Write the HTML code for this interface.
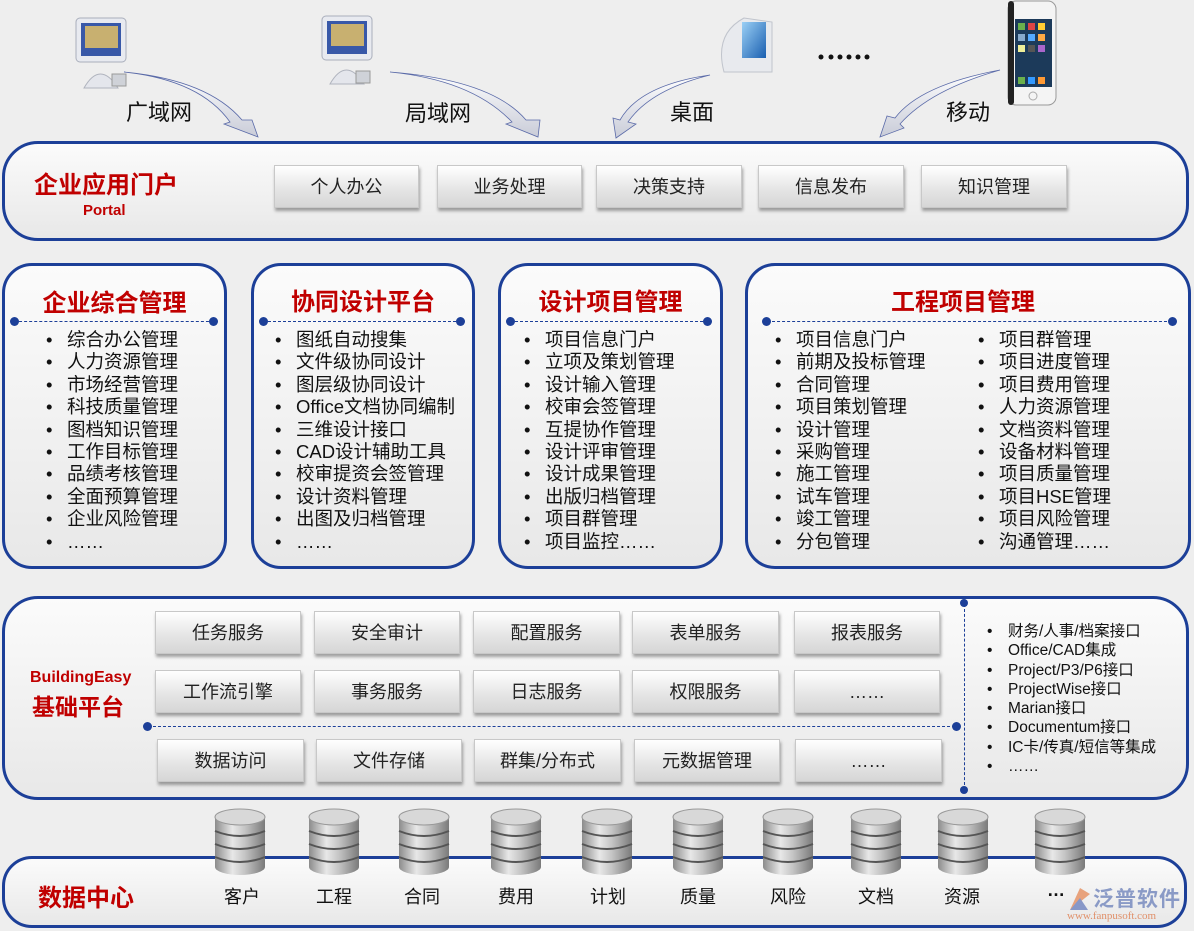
<!DOCTYPE html>
<html><head><meta charset="utf-8">
<style>
*{margin:0;padding:0;box-sizing:border-box}
body{width:1194px;height:931px;background:#eeeeee;position:relative;overflow:hidden;font-family:"Liberation Sans","Noto Sans CJK SC",sans-serif;color:#111}
.a{position:absolute}
.panel{position:absolute;border:3px solid #1c3f98;background:linear-gradient(#fbfbfb,#e8e8e8);}
.btn{position:absolute;height:43px;background:linear-gradient(#ffffff,#e4e4e4 60%,#d6d6d6);border:1px solid #c8c8c8;box-shadow:1px 3px 3px rgba(0,0,0,.35);font-size:18px;text-align:center;line-height:42px;color:#222}
.red{color:#c00000;font-weight:bold;position:absolute}
.t{position:absolute;font-size:18.5px;line-height:22.4px;white-space:nowrap;color:#111}
.t div:before{content:"•";position:absolute;margin-left:-21px}
.lbl{position:absolute;font-size:22px;white-space:nowrap;color:#111}
.dl{position:absolute;height:0;border-top:1.5px dashed #1c3f98}
.dot{position:absolute;width:9px;height:9px;border-radius:50%;background:#1c3f98}
.db{position:absolute;font-size:18px;text-align:center;width:60px;color:#111}
</style></head><body>

<svg class="a" style="left:0;top:0" width="1194" height="140">
<defs>
<linearGradient id="ar" x1="0" y1="0" x2="0" y2="1"><stop offset="0" stop-color="#ffffff"/><stop offset="1" stop-color="#c9ccd8"/></linearGradient>
<linearGradient id="scr" x1="0" y1="0" x2="1" y2="1"><stop offset="0" stop-color="#9bd0f5"/><stop offset="1" stop-color="#1a5fb0"/></linearGradient>
</defs>
<g transform="translate(76,18)">
<rect x="0" y="0" width="50" height="44" rx="4" fill="#e8eaf0" stroke="#a9aebb"/>
<rect x="5" y="5" width="40" height="33" fill="#3858a8"/>
<rect x="9" y="8" width="33" height="22" fill="#c8b070"/>
<path d="M8 70 Q24 42 42 70 Z" fill="#e4e6ec" stroke="#b0b4be"/>
<rect x="36" y="56" width="14" height="12" fill="#cfd2d8" stroke="#999"/>
</g>
<g transform="translate(322,16)">
<rect x="0" y="0" width="50" height="44" rx="4" fill="#e8eaf0" stroke="#a9aebb"/>
<rect x="5" y="5" width="40" height="33" fill="#3858a8"/>
<rect x="9" y="8" width="33" height="22" fill="#c8b070"/>
<path d="M8 68 Q24 40 42 68 Z" fill="#e4e6ec" stroke="#b0b4be"/>
<rect x="34" y="55" width="14" height="12" fill="#cfd2d8" stroke="#999"/>
</g>
<g transform="translate(714,14)">
<path d="M10 58 Q0 20 30 4 L58 8 L58 58 Z" fill="#e8eaee" stroke="#c0c4cc"/>
<rect x="28" y="8" width="24" height="36" fill="url(#scr)"/>
</g>
<g fill="#111"><circle cx="821" cy="57" r="2.5"/><circle cx="831" cy="57" r="2.5"/><circle cx="840" cy="57" r="2.5"/><circle cx="849" cy="57" r="2.5"/><circle cx="858" cy="57" r="2.5"/><circle cx="867" cy="57" r="2.5"/></g>
<g transform="translate(1008,1)">
<rect x="0" y="0" width="48" height="104" rx="8" fill="#f4f4f4" stroke="#999"/>
<rect x="0" y="0" width="6" height="104" rx="3" fill="#222"/>
<rect x="7" y="18" width="37" height="68" fill="#1c3a5a"/>
<g fill="#6ab04c"><rect x="10" y="22" width="7" height="7"/><rect x="20" y="22" width="7" height="7" fill="#d44"/><rect x="30" y="22" width="7" height="7" fill="#fc3"/><rect x="10" y="33" width="7" height="7" fill="#8ac"/><rect x="20" y="33" width="7" height="7" fill="#5af"/><rect x="30" y="33" width="7" height="7" fill="#fa4"/><rect x="10" y="44" width="7" height="7" fill="#ee9"/><rect x="20" y="44" width="7" height="7" fill="#555"/><rect x="30" y="44" width="7" height="7" fill="#a6c"/><rect x="10" y="76" width="7" height="7"/><rect x="20" y="76" width="7" height="7" fill="#39f"/><rect x="30" y="76" width="7" height="7" fill="#f93"/></g>
<circle cx="25" cy="95" r="4" fill="none" stroke="#aaa"/>
</g>
<g fill="url(#ar)" stroke="#5a6aa8" stroke-width="0.8">
<path d="M124 72 Q200 80 230 122 L224 124 L258 137 L252 120 L242 120 Q208 80 124 72 Z"/>
<path d="M368 72 Q450 80 490 122 L484 124 L516 137 L518 120 L504 120 Q470 80 368 72 Z" transform="translate(22,0)"/>
<path d="M710 75 Q640 85 620 120 L613 118 L616 138 L636 124 L628 122 Q650 90 710 75 Z"/>
<path d="M1000 70 Q920 85 895 118 L887 116 L880 137 L904 128 L900 124 Q930 90 1000 70 Z"/>
</g>
</svg>
<div class="lbl" style="left:126px;top:95px">广域网</div>
<div class="lbl" style="left:405px;top:96px">局域网</div>
<div class="lbl" style="left:670px;top:95px">桌面</div>
<div class="lbl" style="left:946px;top:95px">移动</div>

<div class="panel" style="left:2px;top:141px;width:1187px;height:100px;border-radius:36px"></div>
<div class="red" style="left:34px;top:165px;font-size:24px">企业应用门户</div>
<div class="red" style="left:83px;top:202px;font-size:15px">Portal</div>
<div class="btn" style="left:274px;top:165px;width:145px">个人办公</div>
<div class="btn" style="left:437px;top:165px;width:145px">业务处理</div>
<div class="btn" style="left:596px;top:165px;width:146px">决策支持</div>
<div class="btn" style="left:758px;top:165px;width:146px">信息发布</div>
<div class="btn" style="left:921px;top:165px;width:146px">知识管理</div>

<div class="panel" style="left:2px;top:263px;width:225px;height:306px;border-radius:30px"></div>
<div class="panel" style="left:251px;top:263px;width:224px;height:306px;border-radius:30px"></div>
<div class="panel" style="left:498px;top:263px;width:225px;height:306px;border-radius:30px"></div>
<div class="panel" style="left:745px;top:263px;width:446px;height:306px;border-radius:30px"></div>

<div class="red" style="left:2px;width:225px;text-align:center;top:283px;font-size:24px">企业综合管理</div>
<div class="red" style="left:251px;width:224px;text-align:center;top:282px;font-size:24px">协同设计平台</div>
<div class="red" style="left:498px;width:225px;text-align:center;top:282px;font-size:24px">设计项目管理</div>
<div class="red" style="left:745px;width:436px;text-align:center;top:282px;font-size:24px">工程项目管理</div>

<div class="dl" style="left:14px;top:321px;width:200px"></div><div class="dot" style="left:10px;top:317px"></div><div class="dot" style="left:209px;top:317px"></div>
<div class="dl" style="left:263px;top:321px;width:198px"></div><div class="dot" style="left:259px;top:317px"></div><div class="dot" style="left:456px;top:317px"></div>
<div class="dl" style="left:510px;top:321px;width:198px"></div><div class="dot" style="left:506px;top:317px"></div><div class="dot" style="left:703px;top:317px"></div>
<div class="dl" style="left:767px;top:321px;width:405px"></div><div class="dot" style="left:762px;top:317px"></div><div class="dot" style="left:1168px;top:317px"></div>

<div class="t" style="left:67px;top:329px"><div>综合办公管理</div><div>人力资源管理</div><div>市场经营管理</div><div>科技质量管理</div><div>图档知识管理</div><div>工作目标管理</div><div>品绩考核管理</div><div>全面预算管理</div><div>企业风险管理</div><div>……</div></div>
<div class="t" style="left:296px;top:329px"><div>图纸自动搜集</div><div>文件级协同设计</div><div>图层级协同设计</div><div>Office文档协同编制</div><div>三维设计接口</div><div>CAD设计辅助工具</div><div>校审提资会签管理</div><div>设计资料管理</div><div>出图及归档管理</div><div>……</div></div>
<div class="t" style="left:545px;top:329px"><div>项目信息门户</div><div>立项及策划管理</div><div>设计输入管理</div><div>校审会签管理</div><div>互提协作管理</div><div>设计评审管理</div><div>设计成果管理</div><div>出版归档管理</div><div>项目群管理</div><div>项目监控……</div></div>
<div class="t" style="left:796px;top:329px"><div>项目信息门户</div><div>前期及投标管理</div><div>合同管理</div><div>项目策划管理</div><div>设计管理</div><div>采购管理</div><div>施工管理</div><div>试车管理</div><div>竣工管理</div><div>分包管理</div></div>
<div class="t" style="left:999px;top:329px"><div>项目群管理</div><div>项目进度管理</div><div>项目费用管理</div><div>人力资源管理</div><div>文档资料管理</div><div>设备材料管理</div><div>项目质量管理</div><div>项目HSE管理</div><div>项目风险管理</div><div>沟通管理……</div></div>

<div class="panel" style="left:2px;top:596px;width:1187px;height:204px;border-radius:36px"></div>
<div class="red" style="left:30px;top:669px;font-size:16px">BuildingEasy</div>
<div class="red" style="left:32px;top:688px;font-size:23px">基础平台</div>
<div class="btn" style="left:155px;top:611px;width:146px">任务服务</div>
<div class="btn" style="left:314px;top:611px;width:146px">安全审计</div>
<div class="btn" style="left:473px;top:611px;width:147px">配置服务</div>
<div class="btn" style="left:632px;top:611px;width:147px">表单服务</div>
<div class="btn" style="left:794px;top:611px;width:146px">报表服务</div>
<div class="btn" style="left:155px;top:670px;width:146px">工作流引擎</div>
<div class="btn" style="left:314px;top:670px;width:146px">事务服务</div>
<div class="btn" style="left:473px;top:670px;width:147px">日志服务</div>
<div class="btn" style="left:632px;top:670px;width:147px">权限服务</div>
<div class="btn" style="left:794px;top:670px;width:146px">……</div>
<div class="dl" style="left:148px;top:726px;width:812px"></div><div class="dot" style="left:143px;top:722px"></div><div class="dot" style="left:952px;top:722px"></div>
<div class="btn" style="left:157px;top:739px;width:147px">数据访问</div>
<div class="btn" style="left:316px;top:739px;width:146px">文件存储</div>
<div class="btn" style="left:474px;top:739px;width:147px">群集/分布式</div>
<div class="btn" style="left:634px;top:739px;width:146px">元数据管理</div>
<div class="btn" style="left:795px;top:739px;width:147px">……</div>
<div class="a" style="left:964px;top:604px;height:186px;border-left:1.5px dashed #1c3f98"></div>
<div class="dot" style="left:960px;top:599px;width:8px;height:8px"></div><div class="dot" style="left:960px;top:786px;width:8px;height:8px"></div>
<div class="t" style="left:1008px;top:622px;font-size:15.5px;line-height:19.3px"><div>财务/人事/档案接口</div><div>Office/CAD集成</div><div>Project/P3/P6接口</div><div>ProjectWise接口</div><div>Marian接口</div><div>Documentum接口</div><div>IC卡/传真/短信等集成</div><div>……</div></div>

<div class="panel" style="left:2px;top:856px;width:1185px;height:72px;border-radius:30px"></div>
<div class="red" style="left:38px;top:878px;font-size:24px">数据中心</div>
<svg class="a" style="left:0;top:805px" width="1194" height="80">
<defs>
<linearGradient id="cy" x1="0" y1="0" x2="1" y2="0"><stop offset="0" stop-color="#8c8c8c"/><stop offset=".35" stop-color="#e8e8e8"/><stop offset=".6" stop-color="#c4c4c4"/><stop offset="1" stop-color="#7a7a7a"/></linearGradient>
<g id="db">
<rect x="-25" y="12" width="50" height="50" fill="url(#cy)"/>
<ellipse cx="0" cy="62" rx="25" ry="8" fill="url(#cy)"/>
<path d="M-25 26 Q0 36 25 26 M-25 39 Q0 49 25 39 M-25 52 Q0 62 25 52" stroke="#555" stroke-width="2" fill="none"/>
<ellipse cx="0" cy="12" rx="25" ry="8" fill="#d8d8d8" stroke="#999"/>
</g>
</defs>
<use href="#db" x="240" y="0"/><use href="#db" x="334" y="0"/><use href="#db" x="424" y="0"/><use href="#db" x="516" y="0"/><use href="#db" x="607" y="0"/><use href="#db" x="698" y="0"/><use href="#db" x="788" y="0"/><use href="#db" x="876" y="0"/><use href="#db" x="963" y="0"/><use href="#db" x="1060" y="0"/>
</svg>
<div class="db" style="left:212px;top:883px">客户</div>
<div class="db" style="left:304px;top:883px">工程</div>
<div class="db" style="left:392px;top:883px">合同</div>
<div class="db" style="left:486px;top:883px">费用</div>
<div class="db" style="left:578px;top:883px">计划</div>
<div class="db" style="left:668px;top:883px">质量</div>
<div class="db" style="left:758px;top:883px">风险</div>
<div class="db" style="left:846px;top:883px">文档</div>
<div class="db" style="left:932px;top:883px">资源</div>
<div class="a" style="left:1047px;top:880px;font-size:18px;font-weight:bold">…</div>
<svg class="a" style="left:1066px;top:886px" width="26" height="26"><path d="M4 24 L14 2 L24 8 Z" fill="#e8a27c"/><path d="M4 24 L14 12 L22 24 Z" fill="#8898c8"/></svg>
<div class="a" style="left:1093px;top:883px;font-size:21px;color:#8a9ac6;font-weight:bold;letter-spacing:1px">泛普软件</div>
<div class="a" style="left:1067px;top:910px;font-size:11px;color:#e0906a;font-family:'Liberation Serif',serif">www.fanpusoft.com</div>
</body></html>
